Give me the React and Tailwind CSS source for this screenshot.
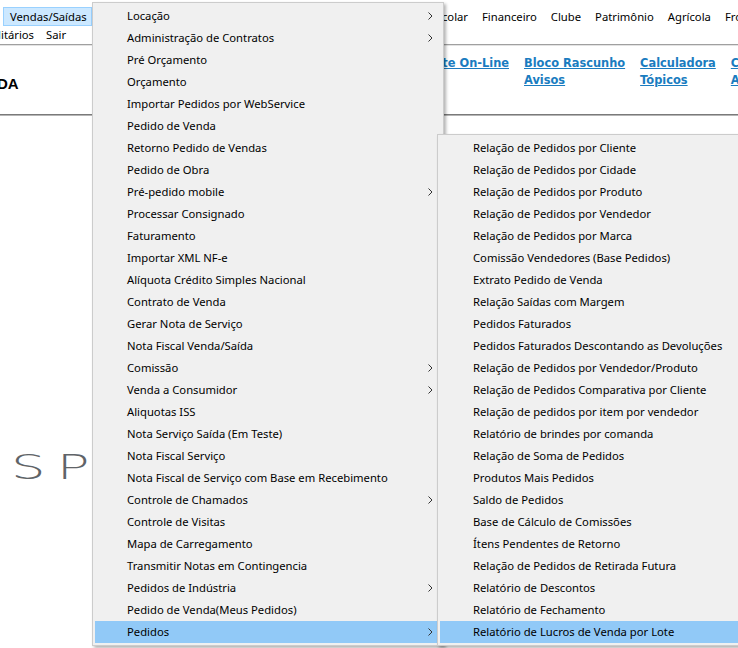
import React from "react";

const mainItems = [
  ["Locação", true],
  ["Administração de Contratos", true],
  ["Pré Orçamento"],
  ["Orçamento"],
  ["Importar Pedidos por WebService"],
  ["Pedido de Venda"],
  ["Retorno Pedido de Vendas"],
  ["Pedido de Obra"],
  ["Pré-pedido mobile", true],
  ["Processar Consignado"],
  ["Faturamento"],
  ["Importar XML NF-e"],
  ["Alíquota Crédito Simples Nacional"],
  ["Contrato de Venda"],
  ["Gerar Nota de Serviço"],
  ["Nota Fiscal Venda/Saída"],
  ["Comissão", true],
  ["Venda a Consumidor", true],
  ["Aliquotas ISS"],
  ["Nota Serviço Saída (Em Teste)"],
  ["Nota Fiscal Serviço"],
  ["Nota Fiscal de Serviço com Base em Recebimento"],
  ["Controle de Chamados", true],
  ["Controle de Visitas"],
  ["Mapa de Carregamento"],
  ["Transmitir Notas em Contingencia"],
  ["Pedidos de Indústria", true],
  ["Pedido de Venda(Meus Pedidos)"],
  ["Pedidos", true, true],
];

const subItems = [
  "Relação de Pedidos por Cliente",
  "Relação de Pedidos por Cidade",
  "Relação de Pedidos por Produto",
  "Relação de Pedidos por Vendedor",
  "Relação de Pedidos por Marca",
  "Comissão Vendedores (Base Pedidos)",
  "Extrato Pedido de Venda",
  "Relação Saídas com Margem",
  "Pedidos Faturados",
  "Pedidos Faturados Descontando as Devoluções",
  "Relação de Pedidos por Vendedor/Produto",
  "Relação de Pedidos Comparativa por Cliente",
  "Relação de pedidos por item por vendedor",
  "Relatório de brindes por comanda",
  "Relação de Soma de Pedidos",
  "Produtos Mais Pedidos",
  "Saldo de Pedidos",
  "Base de Cálculo de Comissões",
  "Ítens Pendentes de Retorno",
  "Relação de Pedidos de Retirada Futura",
  "Relatório de Descontos",
  "Relatório de Fechamento",
  "Relatório de Lucros de Venda por Lote",
];

function Chevron() {
  return (
    <svg width="5" height="8" viewBox="0 0 5 8" className="ml-auto mr-[8px] shrink-0">
      <polyline points="0.5,0.5 4,4 0.5,7.5" fill="none" stroke="#333" strokeWidth="1" />
    </svg>
  );
}

export default function App() {
  const ui = { fontFamily: '"Noto Sans", "Open Sans", sans-serif' };
  return (
    <div className="relative w-[738px] h-[648px] overflow-hidden bg-white text-black text-[11.25px]" style={ui}>
      {/* menu bar row 1 */}
      <div className="h-[26px] pt-[7px] flex items-start whitespace-nowrap">
        <div className="shrink-0 ml-[3px] w-[89px] h-[19px] bg-[#cce8ff] border border-[#99d1ff] flex items-center pl-[6px] leading-none">
          Vendas/Saídas
        </div>
        <div className="shrink-0 w-[376px] h-[19px] flex items-center justify-end leading-none">Escolar</div>
        <div className="shrink-0 ml-[14px] h-[19px] flex items-center gap-[14px] leading-none">
          <span>Financeiro</span>
          <span>Clube</span>
          <span>Patrimônio</span>
          <span>Agrícola</span>
          <span>Frota</span>
        </div>
      </div>
      {/* menu bar row 2 */}
      <div className="h-[18px] flex items-center whitespace-nowrap leading-none">
        <div className="shrink-0 w-[34px] flex justify-end">Utilitários</div>
        <span className="shrink-0 ml-[12px]">Sair</span>
      </div>
      <div className="h-[2px] border-t border-[#a0a0a0] border-b border-b-[#e3e3e3]" />
      {/* header */}
      <div className="h-[68px] flex whitespace-nowrap">
        <div
          className="shrink-0 w-[20px] -ml-[3px] pt-[30px] text-[15px] font-bold leading-none"
          style={{ fontFamily: '"Liberation Sans", Arial, sans-serif' }}
        >
          DA
        </div>
        <div
          className="shrink-0 ml-[314px] pt-[9px] flex gap-[15px] text-[11.4px] font-bold leading-[17px] text-[#1a7cc0] underline"
          style={{ fontFamily: '"DejaVu Sans", Verdana, sans-serif' }}
        >
          <div className="shrink-0 w-[178px] flex justify-end">Suporte On-Line</div>
          <div className="shrink-0 flex flex-col"><span>Bloco Rascunho</span><span>Avisos</span></div>
          <div className="shrink-0 flex flex-col"><span>Calculadora</span><span>Tópicos</span></div>
          <div className="shrink-0 flex flex-col"><span>Cotações</span><span>Agenda</span></div>
        </div>
      </div>
      <div className="h-[2px] bg-[#7a7a7a] border-b border-[#b5b5b5]" />
      {/* body with logo */}
      <div className="pt-[334px] pl-[11px]">
        <div
          className="text-[34px] leading-none text-[#5f6468] tracking-[7px] origin-left scale-x-[1.6]"
          style={{ fontFamily: '"DejaVu Sans", sans-serif', fontWeight: 200 }}
        >
          SP
        </div>
      </div>

      {/* main dropdown menu */}
      <div className="absolute left-[92px] top-[2px] w-[352px] bg-[#f0f0f0] border border-[#cccccc] p-[2px] shadow-[2px_2px_3px_rgba(0,0,0,0.3)]">
        {mainItems.map(([label, sub, active]) => (
          <div
            key={label}
            className={`h-[22px] flex items-center whitespace-nowrap ${active ? "bg-[#91c9f7]" : ""}`}
          >
            <span className="pl-[32px]">{label}</span>
            {sub && <Chevron />}
          </div>
        ))}
      </div>

      {/* submenu */}
      <div className="absolute left-[437px] top-[134px] w-[320px] bg-[#f0f0f0] border border-[#cccccc] p-[2px] shadow-[2px_2px_3px_rgba(0,0,0,0.3)]">
        {subItems.map((label, i) => (
          <div
            key={label}
            className={`h-[22px] flex items-center whitespace-nowrap ${i === subItems.length - 1 ? "bg-[#91c9f7]" : ""}`}
          >
            <span className="pl-[33px]">{label}</span>
          </div>
        ))}
      </div>
    </div>
  );
}
